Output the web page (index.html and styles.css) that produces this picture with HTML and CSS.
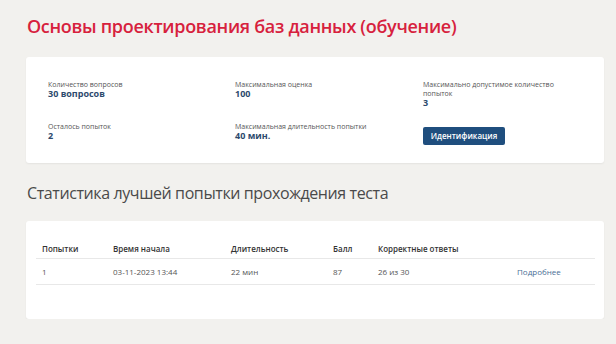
FILE: index.html
```html
<!DOCTYPE html>
<html lang="ru">
<head>
    <meta charset="UTF-8">
    <meta name="viewport" content="width=device-width, initial-scale=1.0">
    <title>Основы проектирования баз данных (обучение)</title>
    <link rel="stylesheet" href="styles.css">
</head>
<body>
    <div class="page">
        <h1 class="test-title">Основы проектирования баз данных (обучение)</h1>

        <div class="card info-card">
            <div class="info-grid">
                <div class="info-item">
                    <div class="info-label">Количество вопросов</div>
                    <div class="info-value">30 вопросов</div>
                </div>
                <div class="info-item">
                    <div class="info-label">Максимальная оценка</div>
                    <div class="info-value">100</div>
                </div>
                <div class="info-item narrow">
                    <div class="info-label">Максимально допустимое количество попыток</div>
                    <div class="info-value">3</div>
                </div>
                <div class="info-item">
                    <div class="info-label">Осталось попыток</div>
                    <div class="info-value">2</div>
                </div>
                <div class="info-item">
                    <div class="info-label">Максимальная длительность попытки</div>
                    <div class="info-value">40 мин.</div>
                </div>
                <div class="info-item">
                    <button class="btn-ident">Идентификация</button>
                </div>
            </div>
        </div>

        <h2 class="section-title">Статистика лучшей попытки прохождения теста</h2>

        <div class="card stats-card">
            <div class="stats-table">
                <div class="stats-row stats-head">
                    <div>Попытки</div>
                    <div>Время начала</div>
                    <div>Длительность</div>
                    <div>Балл</div>
                    <div>Корректные ответы</div>
                    <div></div>
                </div>
                <div class="stats-row">
                    <div>1</div>
                    <div>03-11-2023 13:44</div>
                    <div>22 мин</div>
                    <div>87</div>
                    <div>26 из 30</div>
                    <div><a href="#" class="more-link">Подробнее</a></div>
                </div>
            </div>
        </div>
    </div>
</body>
</html>
```

FILE: styles.css
```css
body {
    margin: 0;
    padding: 0;
    background-color: #f2f1ee;
    font-family: "Open Sans", "Noto Sans", sans-serif;
    color: #444;
}

.page {
    width: 578px;
    margin-left: 26px;
}

.test-title {
    margin: 13px 0 0 1px;
    font-size: 18px;
    line-height: 26px;
    font-weight: 600;
    letter-spacing: -0.3px;
    color: #d7213d;
}

.card {
    background: #fff;
    border-radius: 3px;
    box-shadow: 0 1px 2px rgba(0, 0, 0, 0.06);
    box-sizing: border-box;
}

.info-card {
    margin-top: 18px;
    height: 106px;
    padding: 23px 22px 0 22px;
}

.info-grid {
    display: grid;
    grid-template-columns: 187px 188px 1fr;
    row-gap: 15px;
}

.info-label {
    font-size: 7px;
    line-height: 9px;
    color: #555;
}

.narrow .info-label {
    max-width: 136px;
}

.info-value {
    font-size: 9px;
    line-height: 9px;
    font-weight: 700;
    color: #2d4a6d;
}

.btn-ident {
    width: 82px;
    height: 18px;
    padding: 0;
    border: none;
    border-radius: 2px;
    background-color: #1f4e7e;
    color: #fff;
    font-family: inherit;
    font-size: 8px;
    font-weight: 600;
    cursor: pointer;
}

.section-title {
    margin: 19px 0 0 1px;
    font-size: 16px;
    line-height: 23px;
    font-weight: 400;
    letter-spacing: -0.4px;
    color: #4a4a4a;
}

.stats-card {
    margin-top: 16px;
    height: 98px;
    padding: 17px 9px 0 10px;
}

.stats-row {
    display: grid;
    grid-template-columns: 71px 118px 102px 45px 139px 1fr;
    align-items: center;
    border-bottom: 1px solid #e8e8e8;
    font-size: 8px;
    color: #555;
}

.stats-row > div {
    padding-left: 6px;
}

.stats-head {
    height: 20px;
    font-weight: 600;
    color: #333;
}

.stats-row:not(.stats-head) {
    height: 25px;
}

.more-link {
    color: #4a6e96;
    text-decoration: none;
}
```
